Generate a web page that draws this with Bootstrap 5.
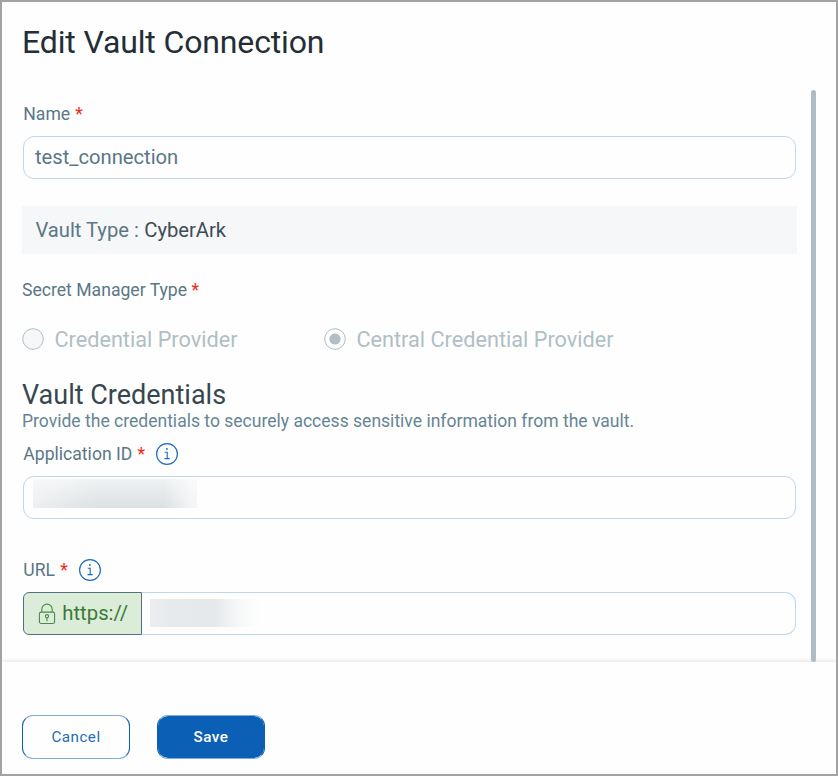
<!DOCTYPE html>
<html lang="en">
<head>
<meta charset="utf-8">
<meta name="viewport" content="width=device-width, initial-scale=1">
<title>Edit Vault Connection</title>
<link href="https://cdn.jsdelivr.net/npm/bootstrap@5.3.0/dist/css/bootstrap.min.css" rel="stylesheet">
<style>
body{font-family:Roboto,"Liberation Sans",sans-serif;color:#5a7785;background:#fff}
.dialog-frame{width:838px;height:776px;border:2px solid #a3a3a3;background:#fefefe;white-space:nowrap}
.dialog-head{height:88px;padding:20px 20px 0}
.dialog-title{font-size:32px;line-height:40px;color:#242e36;font-weight:400;letter-spacing:-.14px}
.dialog-main{height:572px}
.form-area{width:775px;margin-left:20px;padding-top:12px}
.field-label{font-size:17.6px;line-height:24px;height:24px;padding-left:1.3px}
.req{color:#f02a17;margin-left:.8px}
.field-input,.field-input:focus{height:43px;margin:0 1px;width:773px;border:1px solid #bfd7eb;border-radius:11px;font-size:20.2px;line-height:28px;padding:0 11px;color:#5a7785;background:#fefefe;box-shadow:none}
.field-input.name-input{margin-top:10px;margin-bottom:27px;padding-bottom:2px}
.vault-type{height:48px;background:#f6f7f9;font-size:20.2px;line-height:48px;padding-left:13.4px}
.vault-type strong{font-weight:400;color:#3d4c54;margin-left:.4px}
.secret-label{margin-top:24px;margin-bottom:22px}
.secret-label .req{margin-left:0}
.radio-row{height:30px;font-size:21.7px;line-height:30px;color:#b0bec5}
.radio-row span{padding-top:2px}
.radio-first{width:302px}
.radio-row svg{margin-right:10.4px}
.section-title{font-size:27px;line-height:30px;color:#37474f;font-weight:400;margin:26px 0 -1px}
.section-note{font-size:17.55px;line-height:24px;color:#668594}
.app-label{margin-top:9px}
.field-input.app-box{margin-top:10px}
.url-label{margin-top:39px;margin-bottom:10px}
.info-icon{margin:-1px 0 0 11px}
.url-group{margin:0 1px}
.scheme{width:119px;height:43px;border:1px solid #54707e;border-radius:6px 0 0 6px;background:#dbecd9;color:#3b7a37;font-size:20.3px;line-height:41px;padding-left:14px}
.scheme svg{margin-right:6.3px}
.field-input.url-box{width:654px;margin:0;border-left:0;border-radius:0 11px 11px 0;padding-left:8px}
.redact-id{width:164px;height:29px;margin-top:2px;margin-left:-2px;background:linear-gradient(90deg,rgba(254,254,254,.5),rgba(254,254,254,0) 40%,rgba(254,254,254,0) 80%,rgba(254,254,254,.65) 96%,rgba(254,254,254,.7)),linear-gradient(#f0f2f3,#dbe0e3)}
.redact-url{width:110px;height:28px;margin-top:6px;background:linear-gradient(90deg,#ebedef,#e7eaed 20%,#e6e9ec 60%,#f5f6f7 78%,#fefefe)}
.scroll-thumb{width:5px;height:572px;border-radius:3px;background:#aebdc5;margin-left:14px;z-index:2}
.dialog-foot{height:112px;padding:53px 20px 0;background:#fefefe;box-shadow:0 0 5px rgba(0,0,0,.17);gap:27px}
.action{width:108px;height:44px;border-radius:11px;font-size:15.2px;line-height:22px;padding:0 0 1px;letter-spacing:.5px;border-color:#7fadd9 #0b5fb5;background-clip:padding-box}
.btn-cancel{color:#1f6db8}
.btn-save{background-color:#0b5fb5;color:#fff;font-weight:500}
</style>
<script src="https://cdn.jsdelivr.net/npm/bootstrap@5.3.0/dist/js/bootstrap.bundle.min.js"></script>
</head>
<body>
<div class="dialog-frame overflow-hidden">
  <header class="dialog-head"><h1 class="dialog-title m-0">Edit Vault Connection</h1></header>
  <main class="dialog-main d-flex">
    <form class="form-area flex-shrink-0">
      <label class="field-label d-block" for="name">Name <span class="req">*</span></label>
      <input id="name" class="form-control field-input name-input" type="text" value="test_connection">
      <div class="vault-type">Vault Type : <strong>CyberArk</strong></div>
      <div class="field-label ps-0 secret-label">Secret Manager Type <span class="req">*</span></div>
      <div class="radio-row d-flex">
        <div class="radio-first d-flex align-items-center">
          <svg width="22" height="22" viewBox="0 0 22 22"><circle cx="11" cy="11" r="10.3" fill="#f6f7f9" stroke="#b0bec5"/></svg>
          <span>Credential Provider</span>
        </div>
        <div class="d-flex align-items-center">
          <svg width="22" height="22" viewBox="0 0 22 22"><circle cx="11" cy="11" r="10.3" fill="#fefefe" stroke="#b0bec5"/><circle cx="11" cy="11" r="5.6" fill="#b0bec5"/></svg>
          <span>Central Credential Provider</span>
        </div>
      </div>
      <h2 class="section-title">Vault Credentials</h2>
      <p class="section-note m-0">Provide the credentials to securely access sensitive information from the vault.</p>
      <div class="field-label d-flex align-items-center app-label">
        <span>Application ID <span class="req">*</span></span>
        <svg class="info-icon" width="22" height="22" viewBox="0 0 22 22" fill="none" stroke="#1b6ac0"><circle cx="11" cy="11" r="10.4" stroke-width="1.2"/><path d="M8.7 9.2H11.2V15.5M8.5 15.6H13.7" stroke-width="1.1"/><circle cx="10.9" cy="6" r=".9" fill="#1b6ac0" stroke="none"/></svg>
      </div>
      <div class="form-control field-input app-box"><div class="redact-id"></div></div>
      <div class="field-label d-flex align-items-center url-label">
        <span>URL <span class="req">*</span></span>
        <svg class="info-icon" width="22" height="22" viewBox="0 0 22 22" fill="none" stroke="#1b6ac0"><circle cx="11" cy="11" r="10.4" stroke-width="1.2"/><path d="M8.7 9.2H11.2V15.5M8.5 15.6H13.7" stroke-width="1.1"/><circle cx="10.9" cy="6" r=".9" fill="#1b6ac0" stroke="none"/></svg>
      </div>
      <div class="url-group d-flex">
        <div class="scheme d-flex align-items-center">
          <svg width="18" height="22" viewBox="0 0 18 22" fill="none" stroke="#4b8a48" stroke-width="1.1"><rect x="1.4" y="9.1" width="15.2" height="11.4" rx="1.8"/><path d="M3.8 9V6.3a5.2 5.2 0 0 1 10.4 0V9"/><circle cx="9" cy="13.2" r="1.6"/><path d="M9 14.8V18.2"/></svg>
          <span>https://</span>
        </div>
        <div class="form-control field-input url-box"><div class="redact-url"></div></div>
      </div>
    </form>
    <div class="scroll-thumb position-relative flex-shrink-0"></div>
  </main>
  <footer class="dialog-foot d-flex position-relative">
    <button type="button" class="btn action btn-cancel">Cancel</button>
    <button type="button" class="btn action btn-save">Save</button>
  </footer>
</div>
</body>
</html>
